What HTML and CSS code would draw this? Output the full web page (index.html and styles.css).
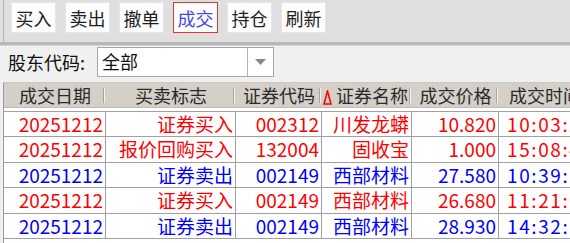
FILE: index.html
```html
<!DOCTYPE html>
<html lang="zh">
<head>
<meta charset="utf-8">
<link rel="stylesheet" href="styles.css">
</head>
<body>
<div class="app">
  <div class="toolbar">
    <div class="tb-inner">
      <button class="btn">买入</button>
      <button class="btn">卖出</button>
      <button class="btn">撤单</button>
      <button class="btn active">成交</button>
      <button class="btn">持仓</button>
      <button class="btn">刷新</button>
    </div>
  </div>
  <div class="filter">
    <span class="label">股东代码:</span>
    <div class="combo">
      <span class="combo-text">全部</span>
      <span class="combo-btn"><svg width="11" height="6" viewBox="0 0 11 6"><polygon points="0,0 11,0 5.5,6" fill="#888"/></svg></span>
    </div>
  </div>
  <div class="table">
    <div class="thead">
      <div class="th">成交日期</div>
      <div class="th">买卖标志</div>
      <div class="th">证券代码</div>
      <div class="th th-sort"><svg class="sort" width="9" height="15" viewBox="0 0 9 15"><polygon points="4.5,1 8,14 1,14" fill="none" stroke="#f00" stroke-width="1.6"/></svg>证券名称</div>
      <div class="th">成交价格</div>
      <div class="th th-last">成交时间</div>
    </div>
    <div class="tbody">
      <div class="tr red"><div class="td">20251212</div><div class="td">证券买入</div><div class="td">002312</div><div class="td">川发龙蟒</div><div class="td">10.820</div><div class="td td-last">10:03:26</div></div>
      <div class="tr red"><div class="td">20251212</div><div class="td">报价回购买入</div><div class="td">132004</div><div class="td">固收宝</div><div class="td">1.000</div><div class="td td-last">15:08:41</div></div>
      <div class="tr blue"><div class="td">20251212</div><div class="td">证券卖出</div><div class="td">002149</div><div class="td">西部材料</div><div class="td">27.580</div><div class="td td-last">10:39:12</div></div>
      <div class="tr red"><div class="td">20251212</div><div class="td">证券买入</div><div class="td">002149</div><div class="td">西部材料</div><div class="td">26.680</div><div class="td td-last">11:21:05</div></div>
      <div class="tr blue"><div class="td">20251212</div><div class="td">证券卖出</div><div class="td">002149</div><div class="td">西部材料</div><div class="td">28.930</div><div class="td td-last">14:32:50</div></div>
    </div>
  </div>
</div>
</body>
</html>
```

FILE: styles.css
```css
* { box-sizing: border-box; }
html, body {
  margin: 0;
  padding: 0;
  background: #f0f0f0;
  width: 570px;
  height: 243px;
  overflow: hidden;
  font-family: "Noto Sans CJK SC", "Noto Sans", sans-serif;
}
.app {
  width: 570px;
  height: 243px;
  overflow: hidden;
}
.toolbar {
  height: 45px;
  background: #dfdfdf;
  padding-left: 3px;
  border-bottom: 3px solid #b8b8b8;
  box-shadow: 0 1px 0 #d4d4d4;
}
.tb-inner {
  height: 100%;
  border-left: 1px solid #b0b0b0;
  display: flex;
  gap: 9px;
  padding: 2px 0 0 7px;
}
.btn {
  width: 45px;
  height: 31px;
  margin: 0;
  padding: 0;
  background: #fdfdfd;
  border: 1px solid #e6e6e6;
  font-family: "Noto Sans CJK SC", sans-serif;
  font-size: 18px;
  line-height: 28px;
  color: #1e1e1e;
  text-align: center;
}
.btn.active {
  border-color: #e0343c;
  color: #4646e8;
}
.filter {
  height: 37px;
  display: flex;
  align-items: flex-start;
  padding: 2px 0 0 8px;
}
.label {
  font-size: 18px;
  line-height: 30px;
  color: #111;
  width: 89px;
}
.combo {
  width: 177px;
  height: 30px;
  background: #fff;
  border: 1px solid #a8a8a8;
  display: flex;
}
.combo-text {
  flex: 1;
  font-size: 18px;
  line-height: 27px;
  padding-left: 4px;
  color: #111;
}
.combo-btn {
  width: 26px;
  border-left: 1px solid #b4b4b4;
  display: flex;
  align-items: center;
  justify-content: center;
}
.table {
  margin-left: 3px;
  border-left: 1px solid #9a9a9a;
  border-top: 1px solid #c8c8c8;
  background: #fff;
  height: 200px;
}
.thead, .tr {
  display: grid;
  grid-template-columns: 102px 130px 86px 90px 87px 1fr;
}
.thead {
  height: 25px;
  background: #d4d0c8;
  border-bottom: 1px solid #c0bcb4;
}
.th {
  position: relative;
  font-size: 18px;
  line-height: 25px;
  color: #2a2a2a;
  text-align: center;
  white-space: nowrap;
  overflow: hidden;
}
.th::after {
  content: "";
  position: absolute;
  right: 2px;
  top: 5px;
  height: 15px;
  width: 1px;
  background: #a8a49c;
  box-shadow: 1px 0 0 #f4f2ee;
}
.th-last::after { display: none; }
.th-last { text-align: left; padding-left: 10px; }
.th-sort { text-align: right; padding-right: 4px; }
.sort { vertical-align: -2px; margin-right: 4px; }
.tbody {
  margin-top: 3px;
  border-top: 1px solid #a0a0a0;
}
.tr {
  height: 25.4px;
  border-bottom: 1px solid #a0a0a0;
}
.td {
  font-size: 19px;
  line-height: 24px;
  text-align: right;
  padding-right: 2px;
  border-right: 1px solid #a0a0a0;
  white-space: nowrap;
}
.td-last {
  border-right: none;
  text-align: left;
  padding-left: 8px;
  letter-spacing: 1.6px;
}
.red .td { color: #ff0000; }
.blue .td { color: #0000ff; }
```
